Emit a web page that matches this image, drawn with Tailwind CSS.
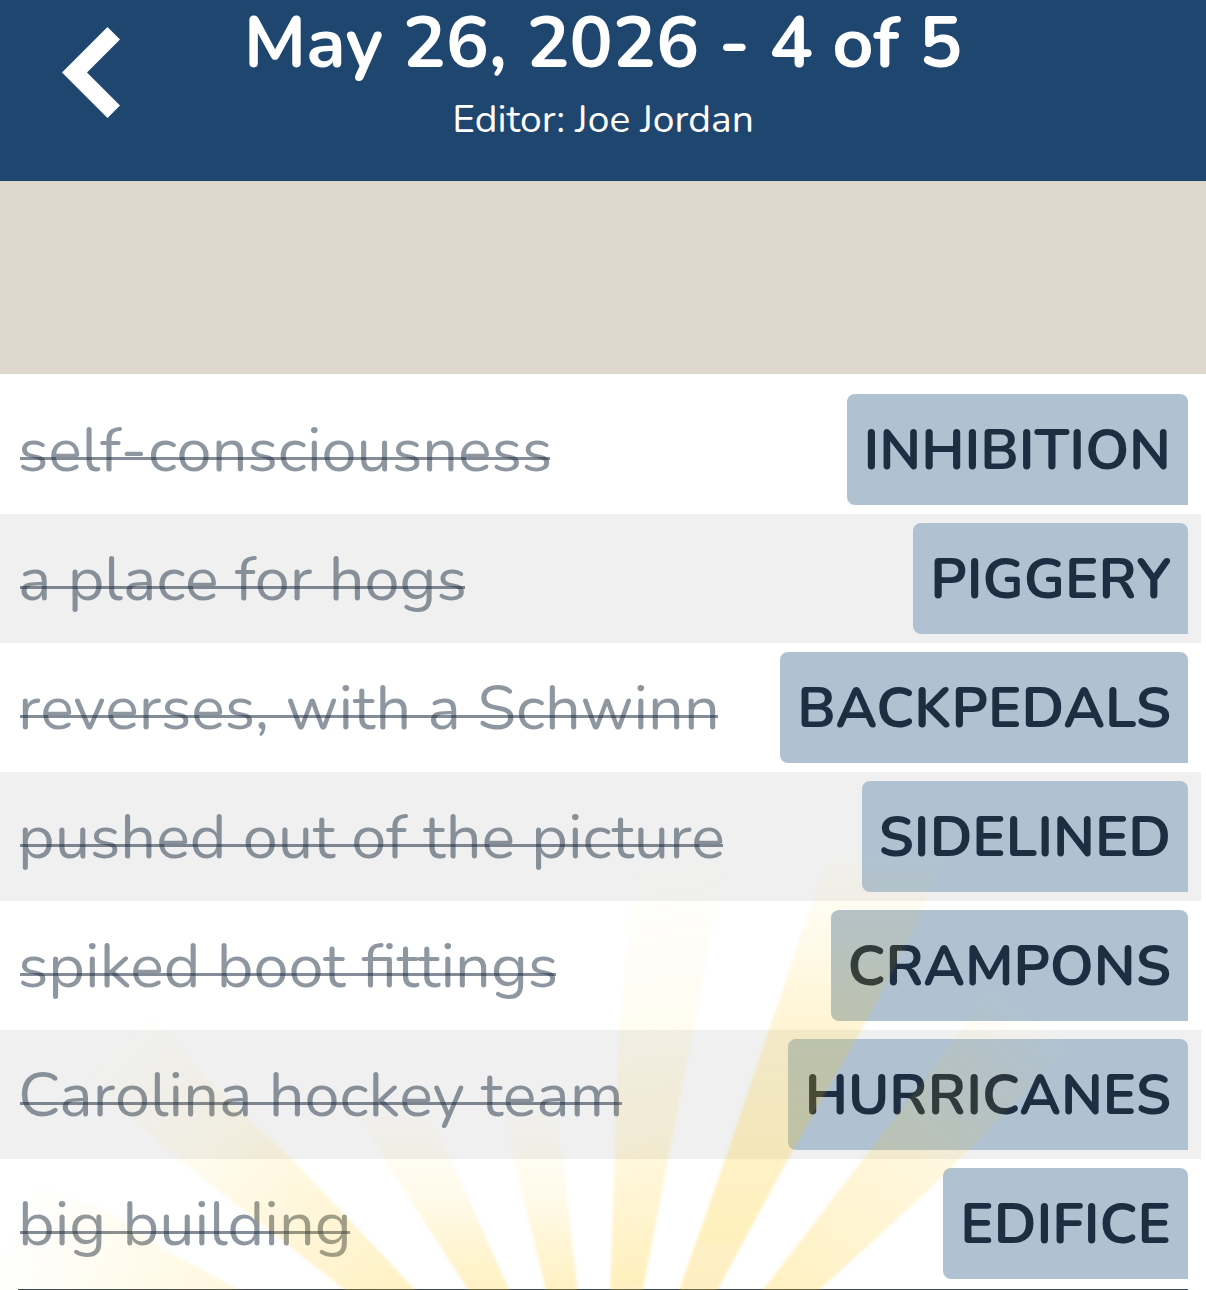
<!DOCTYPE html>
<html lang="en">
<head>
  <meta charset="UTF-8" />
  <meta name="viewport" content="width=device-width, initial-scale=1" />
  <title>May 26, 2026 - 4 of 5</title>
  <script src="https://cdn.jsdelivr.net/npm/@tailwindcss/browser@4"></script>
</head>
<body class="bg-white font-['Nunito','Open_Sans',sans-serif] text-[#1d2d42] overflow-x-hidden">

<!-- Header -->
<header class="relative bg-[#1f466f] text-white text-center pb-[31px]">
  <a href="#" aria-label="Back" class="absolute left-[62px] top-[27px]">
    <svg class="block w-[58px] h-[91px]" viewBox="0 0 58 91" fill="#fff">
      <path d="M0 45.500 45.500 0 58 12.500 25 45.500 58 78.500 45.500 91Z" />
    </svg>
  </a>
  <h1 class="text-[72px] leading-[86px] font-bold">May 26, 2026 - 4 of 5</h1>
  <p class="pt-1 text-[39px] leading-[60px]">Editor: Joe Jordan</p>
</header>

<div class="h-[193px] bg-[#ded8cc]"></div>

<main class="relative pt-[11px]">
  <!-- Clues and answers -->
  <ul class="mr-[5px]">
    <li class="flex items-center justify-between h-[129px] pl-[18px] pr-[13px]">
      <del class="relative no-underline text-[63px] leading-[86px] text-[#1d2d42]/50 after:absolute after:inset-x-[2px] after:top-[50px] after:h-[3px] after:bg-[#1d2d42]/55">self-consciousness</del>
      <span class="h-[111px] px-[17px] rounded-lg rounded-br-none bg-[#b0c2d2] text-[56px] leading-[114px] font-bold">INHIBITION</span>
    </li>
    <li class="flex items-center justify-between h-[129px] pl-[18px] pr-[13px] bg-[#f0f0f0]">
      <del class="relative no-underline text-[63px] leading-[86px] text-[#1d2d42]/50 after:absolute after:inset-x-[2px] after:top-[50px] after:h-[3px] after:bg-[#1d2d42]/55">a place for hogs</del>
      <span class="h-[111px] px-[17px] rounded-lg rounded-br-none bg-[#b0c2d2] text-[56px] leading-[114px] font-bold">PIGGERY</span>
    </li>
    <li class="flex items-center justify-between h-[129px] pl-[18px] pr-[13px]">
      <del class="relative no-underline text-[63px] leading-[86px] text-[#1d2d42]/50 after:absolute after:inset-x-[2px] after:top-[50px] after:h-[3px] after:bg-[#1d2d42]/55">reverses, with a Schwinn</del>
      <span class="h-[111px] px-[17px] rounded-lg rounded-br-none bg-[#b0c2d2] text-[56px] leading-[114px] font-bold">BACKPEDALS</span>
    </li>
    <li class="flex items-center justify-between h-[129px] pl-[18px] pr-[13px] bg-[#f0f0f0]">
      <del class="relative no-underline text-[63px] leading-[86px] text-[#1d2d42]/50 after:absolute after:inset-x-[2px] after:top-[50px] after:h-[3px] after:bg-[#1d2d42]/55">pushed out of the picture</del>
      <span class="h-[111px] px-[17px] rounded-lg rounded-br-none bg-[#b0c2d2] text-[56px] leading-[114px] font-bold">SIDELINED</span>
    </li>
    <li class="flex items-center justify-between h-[129px] pl-[18px] pr-[13px]">
      <del class="relative no-underline text-[63px] leading-[86px] text-[#1d2d42]/50 after:absolute after:inset-x-[2px] after:top-[50px] after:h-[3px] after:bg-[#1d2d42]/55">spiked boot fittings</del>
      <span class="h-[111px] px-[17px] rounded-lg rounded-br-none bg-[#b0c2d2] text-[56px] leading-[114px] font-bold">CRAMPONS</span>
    </li>
    <li class="flex items-center justify-between h-[129px] pl-[18px] pr-[13px] bg-[#f0f0f0]">
      <del class="relative no-underline text-[63px] leading-[86px] text-[#1d2d42]/50 after:absolute after:inset-x-[2px] after:top-[50px] after:h-[3px] after:bg-[#1d2d42]/55">Carolina hockey team</del>
      <span class="h-[111px] px-[17px] rounded-lg rounded-br-none bg-[#b0c2d2] text-[56px] leading-[114px] font-bold">HURRICANES</span>
    </li>
    <li class="flex items-center justify-between h-[129px] pl-[18px] pr-[13px]">
      <del class="relative no-underline text-[63px] leading-[86px] text-[#1d2d42]/50 after:absolute after:inset-x-[2px] after:top-[50px] after:h-[3px] after:bg-[#1d2d42]/55">big building</del>
      <span class="h-[111px] px-[17px] rounded-lg rounded-br-none bg-[#b0c2d2] text-[56px] leading-[114px] font-bold">EDIFICE</span>
    </li>
  </ul>
  <div class="mx-[18px] border-t border-transparent">
    <div class="h-px bg-[#3c444e]"></div>
  </div>

  <!-- Sun rays over the lower rows -->
  <svg class="absolute bottom-0 left-0 w-full h-[450px] pointer-events-none" viewBox="0 840 1206 450" preserveAspectRatio="none" aria-hidden="true">
    <defs>
      <linearGradient id="rayTall" gradientUnits="userSpaceOnUse" x1="0" y1="850" x2="0" y2="1290">
        <stop offset="0" stop-color="#fcc314" stop-opacity="0" />
        <stop offset=".15" stop-color="#fcc314" stop-opacity=".06" />
        <stop offset=".4" stop-color="#fcc314" stop-opacity=".17" />
        <stop offset="1" stop-color="#fcc314" stop-opacity=".28" />
      </linearGradient>
      <linearGradient id="rayUp" gradientUnits="userSpaceOnUse" x1="630" y1="870" x2="700" y2="1290">
        <stop offset="0" stop-color="#fcc314" stop-opacity="0" />
        <stop offset=".4" stop-color="#fcc314" stop-opacity=".06" />
        <stop offset=".7" stop-color="#fcc314" stop-opacity=".14" />
        <stop offset="1" stop-color="#fcc314" stop-opacity=".28" />
      </linearGradient>
      <linearGradient id="rayRight" gradientUnits="userSpaceOnUse" x1="1020" y1="1000" x2="780" y2="1300">
        <stop offset="0" stop-color="#fcc314" stop-opacity="0" />
        <stop offset=".4" stop-color="#fcc314" stop-opacity=".11" />
        <stop offset="1" stop-color="#fcc314" stop-opacity=".24" />
      </linearGradient>
      <linearGradient id="rayLeft" gradientUnits="userSpaceOnUse" x1="130" y1="1030" x2="390" y2="1300">
        <stop offset="0" stop-color="#fcc314" stop-opacity="0" />
        <stop offset=".35" stop-color="#fcc314" stop-opacity=".06" />
        <stop offset="1" stop-color="#fcc314" stop-opacity=".23" />
      </linearGradient>
      <linearGradient id="rayShort" gradientUnits="userSpaceOnUse" x1="0" y1="1100" x2="0" y2="1290">
        <stop offset="0" stop-color="#fcc314" stop-opacity="0" />
        <stop offset=".5" stop-color="#fcc314" stop-opacity=".08" />
        <stop offset="1" stop-color="#fcc314" stop-opacity=".24" />
      </linearGradient>
      <linearGradient id="rayLow" gradientUnits="userSpaceOnUse" x1="20" y1="1210" x2="240" y2="1310">
        <stop offset="0" stop-color="#fcc314" stop-opacity="0" />
        <stop offset="1" stop-color="#fcc314" stop-opacity=".14" />
      </linearGradient>
      <filter id="soft" x="-5%" y="-5%" width="110%" height="110%">
        <feGaussianBlur stdDeviation="1.500" />
      </filter>
    </defs>
    <g filter="url(#soft)">
      <path fill="url(#rayUp)" d="M610 1294 619 1032 636 860H724L693 1032 642 1294Z" />
      <path fill="url(#rayTall)" d="M678 1294 725 1160 768 1033 830 850H945L919 920 867 1020 793 1150 715 1294Z" />
      <path fill="url(#rayRight)" d="M760 1294 870 1150 967 1023 1010 960 1110 1000 1064 1053 932 1187 815 1294Z" />
      <path fill="url(#rayShort)" d="M547 1294 514 1160 500 1090H550L563 1160 578 1294Z" />
      <path fill="url(#rayShort)" d="M471 1294 385 1160 345 1090H415L451 1160 511 1294Z" />
      <path fill="url(#rayLeft)" d="M350 1294 180 1160 143 1127 60 1050 150 1010 200 1070 247 1117 293 1160 419 1294Z" />
      <path fill="url(#rayLow)" d="M0 1294V1170L110 1213 160 1247 247 1294Z" />
    </g>
  </svg>
</main>

</body>
</html>
